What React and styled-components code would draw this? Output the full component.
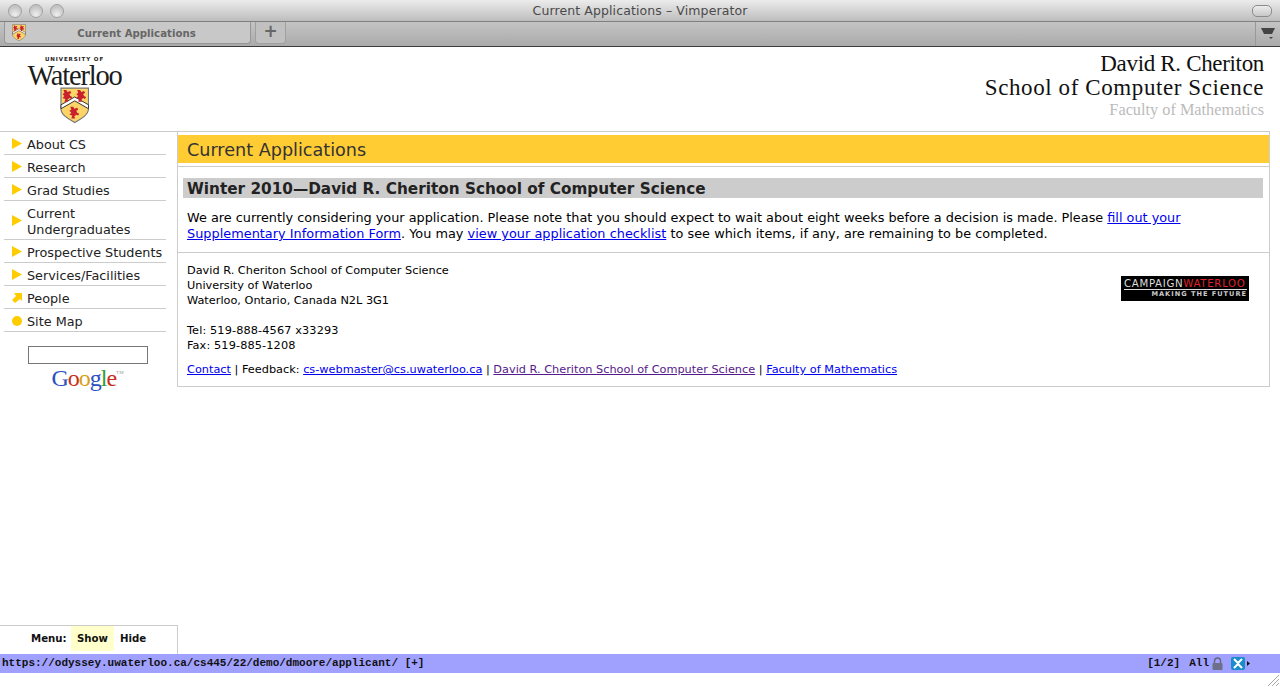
import React from "react"
import styled, { createGlobalStyle } from "styled-components"

const verdana = `"DejaVu Sans", Verdana, sans-serif`
const serif = `"Liberation Serif", "Times New Roman", serif`

const Global = createGlobalStyle`
  html, body { margin: 0; padding: 0; background: #fff; height: 100%; overflow: hidden; }
  #root { height: 100%; }
  a { color: #0000ee; }
`

const Page = styled.div`
  height: 687px;
  display: flex;
  flex-direction: column;
  font-family: ${verdana};
  color: #000;
`

/* browser chrome */
const TitleBar = styled.div`
  height: 22px;
  flex: none;
  display: flex;
  align-items: center;
  padding: 0 8px;
  background: linear-gradient(#ececec, #bdbdbd);
  border-bottom: 1px solid #7f7f7f;
  box-sizing: border-box;
`
const Lights = styled.div`
  flex: 1;
  display: flex;
  gap: 7px;
`
const Light = styled.span`
  width: 14px;
  height: 14px;
  border-radius: 50%;
  border: 1px solid #a2a2a2;
  box-sizing: border-box;
  background: radial-gradient(circle at 50% 80%, #efefef, #c4c4c4 70%);
`
const WindowTitle = styled.div`
  font: 12.5px ${verdana};
  color: #4a4a4a;
  letter-spacing: 0.1px;
`
const PillSlot = styled.div`
  flex: 1;
  display: flex;
  justify-content: flex-end;
`
const Pill = styled.span`
  width: 18px;
  height: 10px;
  border-radius: 5px;
  border: 1px solid #8c8c8c;
  background: linear-gradient(#ececec, #c8c8c8);
`
const TabBar = styled.div`
  height: 25px;
  flex: none;
  display: flex;
  box-sizing: border-box;
  background: linear-gradient(#c4c4c4, #aaa);
  border-bottom: 1px solid #3c3c3c;
  padding-left: 4px;
`
const Tab = styled.div`
  width: 247px;
  height: 22px;
  display: flex;
  align-items: center;
  background: #c8c8c8;
  border: 1px solid #969696;
  border-top: none;
  border-radius: 0 0 4px 4px;
  padding-left: 7px;
  box-sizing: border-box;
`
const TabLabel = styled.span`
  flex: 1;
  text-align: center;
  font: bold 10.2px ${verdana};
  color: #666;
  padding: 1px 3px 0 0;
`
const NewTab = styled.div`
  width: 31px;
  height: 22px;
  margin-left: 4px;
  background: #c0c0c0;
  border: 1px solid #a0a0a0;
  border-top: none;
  border-radius: 0 0 4px 4px;
  box-sizing: border-box;
  font: bold 17px/19px ${verdana};
  color: #666;
  text-align: center;
`
const TabSpacer = styled.div`
  flex: 1;
`
const ToolSlot = styled.div`
  width: 25px;
  border-left: 1px solid #999;
  display: flex;
  justify-content: center;
  padding-top: 6px;
  box-sizing: border-box;
`

/* site header */
const SiteHeader = styled.header`
  height: 84px;
  flex: none;
  display: flex;
  justify-content: space-between;
  box-sizing: border-box;
`
const Logo = styled.div`
  width: 149px;
  display: flex;
  flex-direction: column;
  align-items: center;
  padding-top: 8px;
  box-sizing: border-box;
`
const LogoSmall = styled.div`
  font: bold 5.5px/8px ${verdana};
  letter-spacing: 0.9px;
  color: #222;
`
const LogoWord = styled.div`
  font: 28.5px/25px ${serif};
  letter-spacing: -1.2px;
  color: #1c1c1c;
  margin-bottom: -1px;
`
const School = styled.div`
  text-align: right;
  padding: 5px 16px 0 0;
  font-family: ${serif};
  color: #111;
`
const SchoolLine = styled.div`
  font-size: 23px;
  line-height: 24px;
  letter-spacing: ${p => p.$tracking}px;
`
const Faculty = styled.div`
  font-size: 16.3px;
  line-height: 20px;
  color: #bbb;
`

/* body */
const Body = styled.div`
  flex: 1;
  min-height: 0;
  display: flex;
  align-items: flex-start;
`
const Side = styled.nav`
  width: 177px;
  flex: none;
  box-sizing: border-box;
  border-top: 1px solid #ccc;
`
const NavList = styled.ul`
  list-style: none;
  margin: 0 11px 0 4px;
  padding: 0;
`
const NavItem = styled.li`
  display: flex;
  align-items: center;
  border-bottom: 1px solid #ccc;
  padding: 5px 0 1px;
  font-size: 12.8px;
  line-height: 16px;
  color: #222;
`
const NavIcon = styled.span`
  width: 23px;
  flex: none;
  display: flex;
  padding-left: 8px;
  box-sizing: border-box;
  margin-top: -3px;
`
const Search = styled.div`
  display: flex;
  flex-direction: column;
  align-items: center;
  padding: 14px 2px 0 0;
`
const SearchBox = styled.div`
  width: 120px;
  height: 18px;
  box-sizing: border-box;
  border: 1px solid #777;
`
const Google = styled.div`
  font: 24px/26px ${serif};
  letter-spacing: -1px;
  margin-top: 1px;
  span:nth-child(1) { color: #2a50c0; }
  span:nth-child(2) { color: #c8301c; }
  span:nth-child(3) { color: #d8a017; }
  span:nth-child(4) { color: #2a50c0; }
  span:nth-child(5) { color: #2f9a3c; }
  span:nth-child(6) { color: #c8301c; }
  sup { font-size: 5px; color: #999; letter-spacing: 0; vertical-align: 12px; line-height: 0; }
`
const Main = styled.main`
  width: 1093px;
  height: 256px;
  flex: none;
  box-sizing: border-box;
  border: 1px solid #ccc;
  padding-top: 3px;
`
const Banner = styled.h1`
  margin: 0;
  height: 28px;
  background: #fc3;
  font: 400 17.6px/30px ${verdana};
  color: #333;
  padding-left: 9px;
`
const Content = styled.div`
  margin-top: 3px;
  border-top: 1px solid #ccc;
  padding: 11px 6px 0 5px;
`
const Section = styled.h2`
  margin: 0;
  height: 20px;
  background: #ccc;
  font: bold 15.28px/22px ${verdana};
  color: #222;
  padding-left: 4px;
`
const Lead = styled.p`
  margin: 12px 0 10px 4px;
  font-size: 12.83px;
  line-height: 16px;
  white-space: nowrap;
`
const LeadTail = styled.span`
  letter-spacing: 0.03px;
`
const Footer = styled.div`
  border-top: 1px solid #ccc;
  padding: 10px 20px 0 9px;
  font-size: 11.3px;
  line-height: 15px;
`
const FooterTop = styled.div`
  display: flex;
  justify-content: space-between;
  align-items: flex-start;
`
const Address = styled.div`
  margin-bottom: ${p => p.$gap}px;
  letter-spacing: ${p => p.$tracking || 0}px;
`
const Campaign = styled.div`
  width: 128px;
  height: 25px;
  margin-top: 13px;
  background: #000;
  color: #ddd;
  box-sizing: border-box;
  padding: 2px 2px 0 3px;
  text-align: right;
`
const CampaignTop = styled.div`
  font: 10.2px/11px ${verdana};
  white-space: nowrap;
  text-align: left;
  letter-spacing: 0.68px;
  border-bottom: 1px solid #ddd;
  b { font-weight: 400; color: #e0202c; }
`
const CampaignSub = styled.div`
  font: bold 6.6px/9px ${verdana};
  letter-spacing: 1px;
  color: #ccc;
`
const FooterLinks = styled.div`
  a.visited { color: #551a8b; }
`

/* bottom bars */
const MenuBox = styled.div`
  width: 178px;
  height: 29px;
  flex: none;
  box-sizing: border-box;
  border: 1px solid #ccc;
  border-left: none;
  border-bottom: none;
  display: flex;
  align-items: flex-start;
  padding-left: 31px;
  font: bold 10.2px/25px ${verdana};
  color: #111;
`
const MenuLabel = styled.span`
  width: 40px;
`
const MenuOption = styled.span`
  padding: 0 6px;
  background: ${p => (p.$active ? "#ffffcc" : "transparent")};
`
const StatusBar = styled.div`
  height: 19px;
  flex: none;
  background: #a0a0ff;
  display: flex;
  align-items: center;
  justify-content: space-between;
  padding: 0 29px 0 2px;
  font: bold 11px/19px "Liberation Mono", monospace;
  color: #111;
`
const StatusRight = styled.div`
  display: flex;
  align-items: center;
  gap: 9px;
`
const LockSlot = styled.span`
  display: flex;
  margin: 0 -1px 0 -6px;
`
const Grip = styled.div`
  height: 14px;
  flex: none;
  display: flex;
  justify-content: flex-end;
`

const Arrow = () => (
  <svg width="10" height="11" viewBox="0 0 10 11">
    <path d="M0 0 L10 5.5 L0 11 Z" fill="#ffcc00" />
  </svg>
)
const DiagArrow = () => (
  <svg width="10" height="10" viewBox="0 0 10 10">
    <path d="M2 0 H10 V8 L8 6 L3 10 L0 7 L4 3 Z" fill="#ffcc00" />
  </svg>
)
const Dot = () => (
  <svg width="10" height="10" viewBox="0 0 10 10">
    <circle cx="5" cy="5" r="5" fill="#ffcc00" />
  </svg>
)

const Lion = ({ x, y, s = 1 }) => (
  <path
    transform={`translate(${x} ${y}) scale(${s})`}
    d="M1 0 h3 l1 2 l3 -1 l1 2 l-2 1 l1 2 l2 1 l-1 2 l-2 -1 l-2 2 l1 2 h-4 l1 -3 l-3 -1 l2 -2 l-2 -2 l2 -1 z"
    fill="#c8202c"
  />
)

const Shield = ({ size = 30 }) => (
  <svg width={size} height={size * 1.24} viewBox="0 0 30 37">
    <path d="M1 1 H29 V22 C29 29 20 33 15 36 C10 33 1 29 1 22 Z" fill="#fdd468" stroke="#777" strokeWidth="1.2" />
    <path d="M1 22 L15 14 L29 22 V18 L15 10 L1 18 Z" fill="#fff" stroke="#333" strokeWidth="1" />
    <Lion x={2.5} y={3} />
    <Lion x={16.5} y={3} />
    <Lion x={9.5} y={20} />
  </svg>
)

const Lock = () => (
  <svg width="11" height="13" viewBox="0 0 11 13">
    <path d="M2.5 6 V4 a3 3 0 0 1 6 0 V6" fill="none" stroke="#666a80" strokeWidth="1.5" />
    <rect x="0.5" y="6" width="10" height="7" rx="1" fill="#6c7088" />
  </svg>
)

const XBadge = () => (
  <svg width="20" height="13" viewBox="0 0 20 13">
    <rect width="14" height="13" rx="2" fill="#1a8ccc" />
    <path d="M3 2 L7 6 L11 2 M3 11 L7 7 L11 11" fill="none" stroke="#fff" strokeWidth="2" />
    <path d="M16 4 L19 6.5 L16 9 Z" fill="#111" />
  </svg>
)

const navItems = [
  { label: "About CS", icon: <Arrow /> },
  { label: "Research", icon: <Arrow /> },
  { label: "Grad Studies", icon: <Arrow /> },
  { label: <>Current<br />Undergraduates</>, icon: <Arrow /> },
  { label: "Prospective Students", icon: <Arrow /> },
  { label: "Services/Facilities", icon: <Arrow /> },
  { label: "People", icon: <DiagArrow /> },
  { label: "Site Map", icon: <Dot /> },
]

export default function App() {
  return (
    <Page>
      <Global />
      <TitleBar>
        <Lights>
          <Light />
          <Light />
          <Light />
        </Lights>
        <WindowTitle>Current Applications – Vimperator</WindowTitle>
        <PillSlot>
          <Pill />
        </PillSlot>
      </TitleBar>
      <TabBar>
        <Tab>
          <Shield size={14} />
          <TabLabel>Current Applications</TabLabel>
        </Tab>
        <NewTab>+</NewTab>
        <TabSpacer />
        <ToolSlot>
          <svg width="14" height="12" viewBox="0 0 14 12">
            <path d="M0 0 H14 L11 6 H3 Z" fill="#444" />
            <path d="M8 9 H12 L10 11 Z" fill="#444" />
          </svg>
        </ToolSlot>
      </TabBar>

      <SiteHeader>
        <Logo>
          <LogoSmall>UNIVERSITY OF</LogoSmall>
          <LogoWord>Waterloo</LogoWord>
          <Shield size={29.5} />
        </Logo>
        <School>
          <SchoolLine $tracking={-0.33}>David R. Cheriton</SchoolLine>
          <SchoolLine $tracking={0.59}>School of Computer Science</SchoolLine>
          <Faculty>Faculty of Mathematics</Faculty>
        </School>
      </SiteHeader>

      <Body>
        <Side>
          <NavList>
            {navItems.map((item, i) => (
              <NavItem key={i}>
                <NavIcon>{item.icon}</NavIcon>
                <span>{item.label}</span>
              </NavItem>
            ))}
          </NavList>
          <Search>
            <SearchBox />
            <Google>
              <span>G</span><span>o</span><span>o</span><span>g</span><span>l</span><span>e</span><sup>TM</sup>
            </Google>
          </Search>
        </Side>
        <Main>
          <Banner>Current Applications</Banner>
          <Content>
            <Section>Winter 2010—David R. Cheriton School of Computer Science</Section>
            <Lead>
              We are currently considering your application. Please note that you should expect to wait about eight weeks before a decision is made. Please <a href="#f">fill out your</a>
              <br />
              <LeadTail>
                <a href="#f">Supplementary Information Form</a>. You may <a href="#c">view your application checklist</a> to see which items, if any, are remaining to be completed.
              </LeadTail>
            </Lead>
          </Content>
          <Footer>
            <FooterTop>
              <div>
                <Address $gap={15}>
                  David R. Cheriton School of Computer Science
                  <br />
                  University of Waterloo
                  <br />
                  Waterloo, Ontario, Canada N2L 3G1
                </Address>
                <Address $gap={9} $tracking={0.12}>
                  Tel: 519-888-4567 x33293
                  <br />
                  Fax: 519-885-1208
                </Address>
              </div>
              <Campaign>
                <CampaignTop>CAMPAIGN<b>WATERLOO</b></CampaignTop>
                <CampaignSub>MAKING THE FUTURE</CampaignSub>
              </Campaign>
            </FooterTop>
            <FooterLinks>
              <a href="#c">Contact</a> | Feedback: <a href="#m">cs-webmaster@cs.uwaterloo.ca</a> | <a className="visited" href="#s">David R. Cheriton School of Computer Science</a> | <a href="#h">Faculty of Mathematics</a>
            </FooterLinks>
          </Footer>
        </Main>
      </Body>

      <MenuBox>
        <MenuLabel>Menu:</MenuLabel>
        <MenuOption $active>Show</MenuOption>
        <MenuOption>Hide</MenuOption>
      </MenuBox>
      <StatusBar>
        <span>https://odyssey.uwaterloo.ca/cs445/22/demo/dmoore/applicant/ [+]</span>
        <StatusRight>
          <span>[1/2]</span>
          <span>All</span>
          <LockSlot>
            <Lock />
          </LockSlot>
          <XBadge />
        </StatusRight>
      </StatusBar>
      <Grip>
        <svg width="14" height="14" viewBox="0 0 14 14">
          <path d="M2 13 L13 2 M6 13 L13 6 M10 13 L13 10" stroke="#aaa" strokeWidth="1" />
        </svg>
      </Grip>
    </Page>
  )
}
